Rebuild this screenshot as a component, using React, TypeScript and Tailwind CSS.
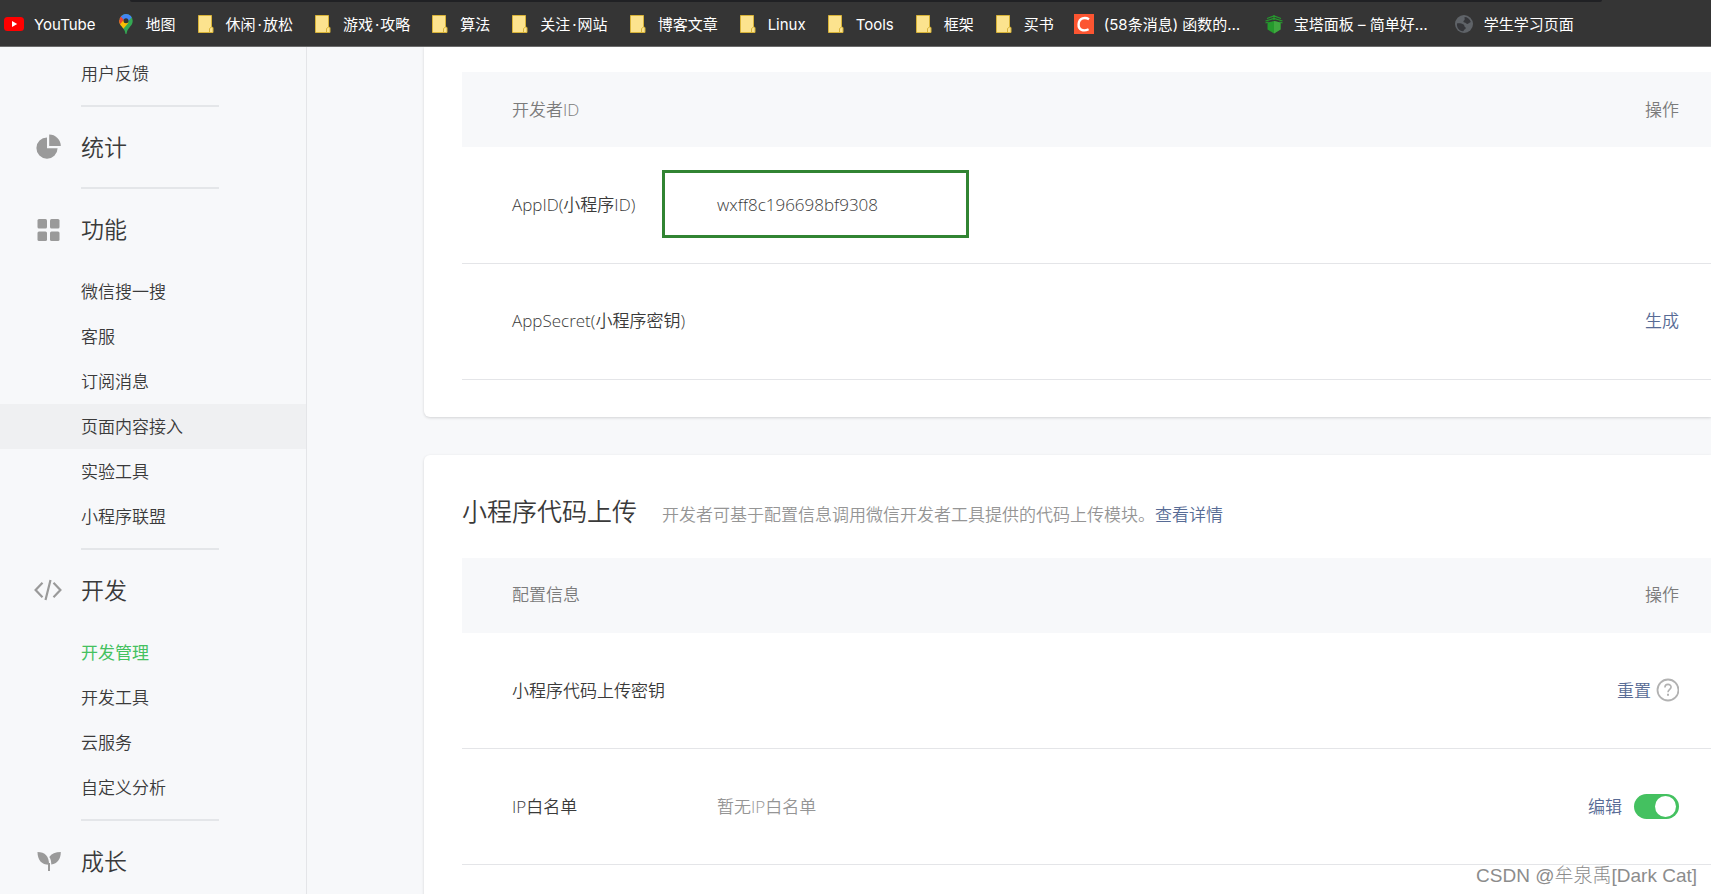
import { useState } from 'react';
import type { ReactNode } from 'react';

type Bookmark = {
  label: ReactNode;
  icon?: ReactNode;
  truncated?: boolean;
};

type MenuSection = {
  title?: string;
  icon?: ReactNode;
  items: string[];
};

const FolderIcon = () => (
  <svg viewBox="0 0 20 20" className="w-5 h-5">
    <path d="M2.5 1.5h13v11.5l1.5 0.5v5h-14.5z" fill="#fce38e" stroke="#d8b338" strokeWidth="1" />
    <path d="M13.5 18.5v-4l2-1.5" fill="none" stroke="#d8b338" strokeWidth="1" />
  </svg>
);

const YouTubeIcon = () => (
  <svg viewBox="0 0 20 20" className="w-5 h-5">
    <rect x="0" y="3" width="20" height="14" rx="3.5" fill="#f00" />
    <path d="M8 7l5.2 3L8 13z" fill="#fff" />
  </svg>
);

const MapsIcon = () => (
  <svg viewBox="0 0 20 20" className="w-5 h-5">
    <clipPath id="pin">
      <path d="M10 0a6.7 6.7 0 0 0-6.7 6.9c0 2.2 1 3.7 2.3 5.4 1.9 2.4 3.2 4 3.7 6.7.2 1 .3 1 .7 1s.5 0 .7-1c.5-2.7 1.8-4.3 3.7-6.7 1.3-1.7 2.3-3.2 2.3-5.4A6.7 6.7 0 0 0 10 0z" />
    </clipPath>
    <g clipPath="url(#pin)">
      <rect width="20" height="20" fill="#34a853" />
      <path d="M0 7l8-2 4.5 3.7-6.5 7.5H0z" fill="#fbbc04" />
      <path d="M0 0h5l3.5 5L4 10.2 0 9z" fill="#ea4335" />
      <path d="M4.8 2.4L8 0h6.5l1.5 3-4 4.5-4-1.5z" fill="#4285f4" />
    </g>
    <circle cx="10" cy="6.7" r="2.5" fill="#353535" />
  </svg>
);

const CsdnIcon = () => (
  <svg viewBox="0 0 20 20" className="w-5 h-5">
    <rect width="20" height="20" fill="#fc5531" />
    <path d="M15 5.2C11 2.8 5 3.8 4.6 10.2c-.3 6 5 7.5 10 5" fill="none" stroke="#fff" strokeWidth="2.4" />
  </svg>
);

const ShieldIcon = () => (
  <svg viewBox="0 0 20 20" className="w-5 h-5">
    <path d="M3.5 8.5l6.5-1.5 6.5 1.500v7L10 19.500l-6.500-4z" fill="#259a2d" />
    <path d="M10 7v12.500l6.500-4v-7z" fill="#3fa83f" />
    <path d="M1.500 7L10 4.500 18.500 7M3 4.500L10 2l7 2.500M10 1v5M1.500 9l3-1M18.500 9l-3-1" fill="none" stroke="#259a2d" strokeWidth="1.2" />
  </svg>
);

const GlobeIcon = () => (
  <svg viewBox="0 0 20 20" className="w-5 h-5">
    <circle cx="10" cy="10" r="9" fill="#5f6368" />
    <path d="M3 9.5c2.500-.5 5 .3 6.500 1 1.200.7.500 1.800 1.500 2.500 1.200.5 1 2-.5 2.500-1 .5-.5 1.500-1.500 1.800C5 17 2.500 13.500 3 9.500zM10.500 3c3 0 5.500 2 6.300 5-1.300.3-2 1.700-3.300 2-1.500 0-1.500-1.500-3-1.500-1.200 0-1.500-1.500-.5-2 1.200-.5.5-2 .5-3.500z" fill="#35363a" />
  </svg>
);

const PieIcon = () => (
  <svg viewBox="0 0 28 28" className="w-7 h-7" fill="#9a9a9a">
    <path d="M13 4.5A10.6 10.6 0 1 0 23.6 15.3H13z" />
    <path d="M15.2 1.5v11.6H26.8A11.6 11.6 0 0 0 15.2 1.5z" />
  </svg>
);

const GridIcon = () => (
  <svg viewBox="0 0 28 28" className="w-7 h-7" fill="#9a9a9a">
    <rect x="3.5" y="4" width="9.5" height="9.5" rx="1.5" />
    <rect x="16" y="4" width="9.5" height="9.5" rx="1.5" />
    <rect x="3.5" y="16.5" width="9.5" height="9.5" rx="1.5" />
    <rect x="16" y="16.5" width="9.5" height="9.5" rx="1.5" />
  </svg>
);

const CodeIcon = () => (
  <svg viewBox="0 0 28 28" className="w-7 h-7" fill="none" stroke="#9a9a9a" strokeWidth="2.2">
    <path d="M8.5 6.8L1.6 14l6.9 7.2M19.5 6.8l6.9 7.2-6.9 7.2M16.5 4L11.5 24" />
  </svg>
);

const SproutIcon = () => (
  <svg viewBox="0 0 28 28" className="w-7 h-7" fill="#9a9a9a">
    <path d="M3.5 5C11 5 15.2 9.5 15 17.8 7.5 17.8 3.5 13 3.5 5z" />
    <path d="M26.8 5c0 7-3.3 11.8-9.5 12.6 0-3.3-.6-5.7-2-7.7C17.5 6.8 21.5 5 26.8 5z" />
    <path d="M14 16h2v8h-2z" />
  </svg>
);

const HelpIcon = () => (
  <svg viewBox="0 0 24 24" className="w-6 h-6" fill="none" stroke="#b2b2b2">
    <circle cx="13" cy="12" r="10.5" strokeWidth="1.8" />
    <path d="M9.9 9.4c0-4 6.2-4 6.2-.3 0 2.1-3.1 2.5-3.1 5.1" strokeWidth="1.6" />
    <path d="M13 15.7v2" strokeWidth="2" />
  </svg>
);

const Dot = () => <span className="ml-0.5 mr-px">·</span>;

const bookmarks: Bookmark[] = [
  { label: 'YouTube', icon: <YouTubeIcon /> },
  { label: '地图', icon: <MapsIcon /> },
  { label: <>休闲<Dot />放松</> },
  { label: <>游戏<Dot />攻略</> },
  { label: '算法' },
  { label: <>关注<Dot />网站</> },
  { label: '博客文章' },
  { label: 'Linux' },
  { label: 'Tools' },
  { label: '框架' },
  { label: '买书' },
  { label: '(58条消息) 函数的…', icon: <CsdnIcon />, truncated: true },
  { label: '宝塔面板 – 简单好…', icon: <ShieldIcon />, truncated: true },
  { label: '学生学习页面', icon: <GlobeIcon /> },
];

const sections: MenuSection[] = [
  { items: ['用户反馈'] },
  { title: '统计', icon: <PieIcon />, items: [] },
  {
    title: '功能',
    icon: <GridIcon />,
    items: ['微信搜一搜', '客服', '订阅消息', '页面内容接入', '实验工具', '小程序联盟'],
  },
  {
    title: '开发',
    icon: <CodeIcon />,
    items: ['开发管理', '开发工具', '云服务', '自定义分析'],
  },
  { title: '成长', icon: <SproutIcon />, items: [] },
];

const linkClass = 'text-[#576b95] hover:underline';

function BookmarkBar() {
  return (
    <header className="shrink-0 h-[47px] bg-[#353535] border-b border-[#6b6b6b] overflow-hidden">
      <div className="h-0.5 ml-[130px] mr-[109px] bg-[#202124] rounded-b-sm" />
      <nav className="flex items-center gap-5 h-11 pl-1">
        {bookmarks.map((bookmark, index) => (
          <a
            key={index}
            href="#"
            className="flex items-center gap-2.5 shrink-0 text-[15px] text-white font-normal font-['Inter','Noto_Sans_CJK_SC',sans-serif]"
          >
            {bookmark.icon ?? <FolderIcon />}
            <span className={bookmark.truncated ? 'pt-0.5 w-[140px] whitespace-nowrap' : 'pt-0.5 whitespace-nowrap'}>
              {bookmark.label}
            </span>
          </a>
        ))}
      </nav>
    </header>
  );
}

function Sidebar() {
  const [active, setActive] = useState('开发管理');
  const highlighted = '页面内容接入';

  return (
    <aside className="shrink-0 w-[307px] pt-1 border-r border-[#e4e5e8] overflow-hidden">
      {sections.map((section, index) => (
        <section key={section.title ?? 'top'}>
          {index > 0 && <hr className="ml-[81px] w-[138px] h-0.5 border-0 bg-[#e4e6e9]" />}
          {section.title && (
            <h2 className="flex items-center h-20 pl-[34px] gap-[19px] text-[23px]">
              {section.icon}
              {section.title}
            </h2>
          )}
          {section.items.length > 0 && (
            <ul className="pb-[9px]">
              {section.items.map((item) => (
                <li key={item}>
                  <button
                    onClick={() => setActive(item)}
                    className={`block w-full h-[45px] pl-[81px] text-left hover:bg-[#eff0f2] ${
                      item === active ? 'text-[#44c160] font-normal' : ''
                    } ${item === highlighted ? 'bg-[#eff0f2]' : ''}`}
                  >
                    {item}
                  </button>
                </li>
              ))}
            </ul>
          )}
        </section>
      ))}
    </aside>
  );
}

type ConfigRow = {
  name: string;
  value?: ReactNode;
  action?: ReactNode;
};

function ConfigTable({ heading, rows }: { heading: string; rows: ConfigRow[] }) {
  return (
    <table className="w-full table-fixed">
      <colgroup>
        <col className="w-[255px]" />
        <col />
        <col className="w-[240px]" />
      </colgroup>
      <thead>
        <tr className="h-[75px] bg-[#f7f8fa] text-[#7b7b7b]">
          <th colSpan={2} className="pl-[50px] text-left font-[350]">{heading}</th>
          <th className="pr-8 text-right font-[350]">操作</th>
        </tr>
      </thead>
      <tbody>
        {rows.map((row) => (
          <tr key={row.name} className="h-[116px] border-b border-[#e4e5e8]">
            <td className="pl-[50px] whitespace-nowrap">{row.name}</td>
            <td className="relative">{row.value}</td>
            <td className="pr-8">
              <div className="flex items-center justify-end">{row.action}</div>
            </td>
          </tr>
        ))}
      </tbody>
    </table>
  );
}

export default function App() {
  const [whitelist, setWhitelist] = useState(true);

  const developerRows: ConfigRow[] = [
    {
      name: 'AppID(小程序ID)',
      value: (
        <>
          wxff8c196698bf9308
          <span className="absolute -left-[55px] top-[23px] w-[307px] h-[68px] border-3 border-[#318432]" />
        </>
      ),
    },
    { name: 'AppSecret(小程序密钥)', action: <a href="#" className={linkClass}>生成</a> },
  ];

  const uploadRows: ConfigRow[] = [
    {
      name: '小程序代码上传密钥',
      action: (
        <>
          <a href="#" className={linkClass}>重置</a>
          <button aria-label="帮助" className="ml-1">
            <HelpIcon />
          </button>
        </>
      ),
    },
    {
      name: 'IP白名单',
      value: <span className="text-[#959595]">暂无IP白名单</span>,
      action: (
        <>
          <a href="#" className={linkClass}>编辑</a>
          <input
            type="checkbox"
            role="switch"
            aria-label="IP白名单"
            checked={whitelist}
            onChange={(e) => setWhitelist(e.target.checked)}
            className="appearance-none ml-3 w-[45px] h-[25px] p-0.5 rounded-full bg-[#d0d0d0] checked:bg-[#44c160] before:block before:w-[21px] before:h-[21px] before:rounded-full before:bg-white checked:before:ml-[19px]"
          />
        </>
      ),
    },
  ];

  return (
    <div className="relative flex flex-col h-screen overflow-hidden bg-[#f7f8fa] text-[17px] text-[#3a3a3a] font-[350] font-['Open_Sans','Noto_Sans_CJK_SC',sans-serif]">
      <BookmarkBar />
      <div className="flex flex-1 min-h-0">
        <Sidebar />
        <main className="flex-1 min-w-0 pl-[117px] overflow-hidden">
          <section className="pl-[38px] pt-[25px] pb-[37px] bg-white rounded-bl-md shadow-[0_1px_3px_rgba(0,0,0,0.15)]">
            <ConfigTable heading="开发者ID" rows={developerRows} />
          </section>

          <section className="mt-[38px] pl-[38px] pt-[38px] pb-[38px] bg-white rounded-tl-md shadow-[0_1px_3px_rgba(0,0,0,0.15)]">
            <div className="flex items-baseline gap-[25px] mb-[29px]">
              <h2 className="text-[25px] leading-9">小程序代码上传</h2>
              <p className="text-[#959595]">
                开发者可基于配置信息调用微信开发者工具提供的代码上传模块。
                <a href="#" className={linkClass}>查看详情</a>
              </p>
            </div>
            <ConfigTable heading="配置信息" rows={uploadRows} />
          </section>
        </main>
      </div>
      <p className="absolute right-3.5 bottom-1 text-[19px] text-[#8c8c8c] font-light [text-shadow:-1px_-1px_0_#fff] font-['Liberation_Sans','Noto_Sans_CJK_SC',sans-serif]">
        CSDN @牟泉禹[Dark Cat]
      </p>
    </div>
  );
}
